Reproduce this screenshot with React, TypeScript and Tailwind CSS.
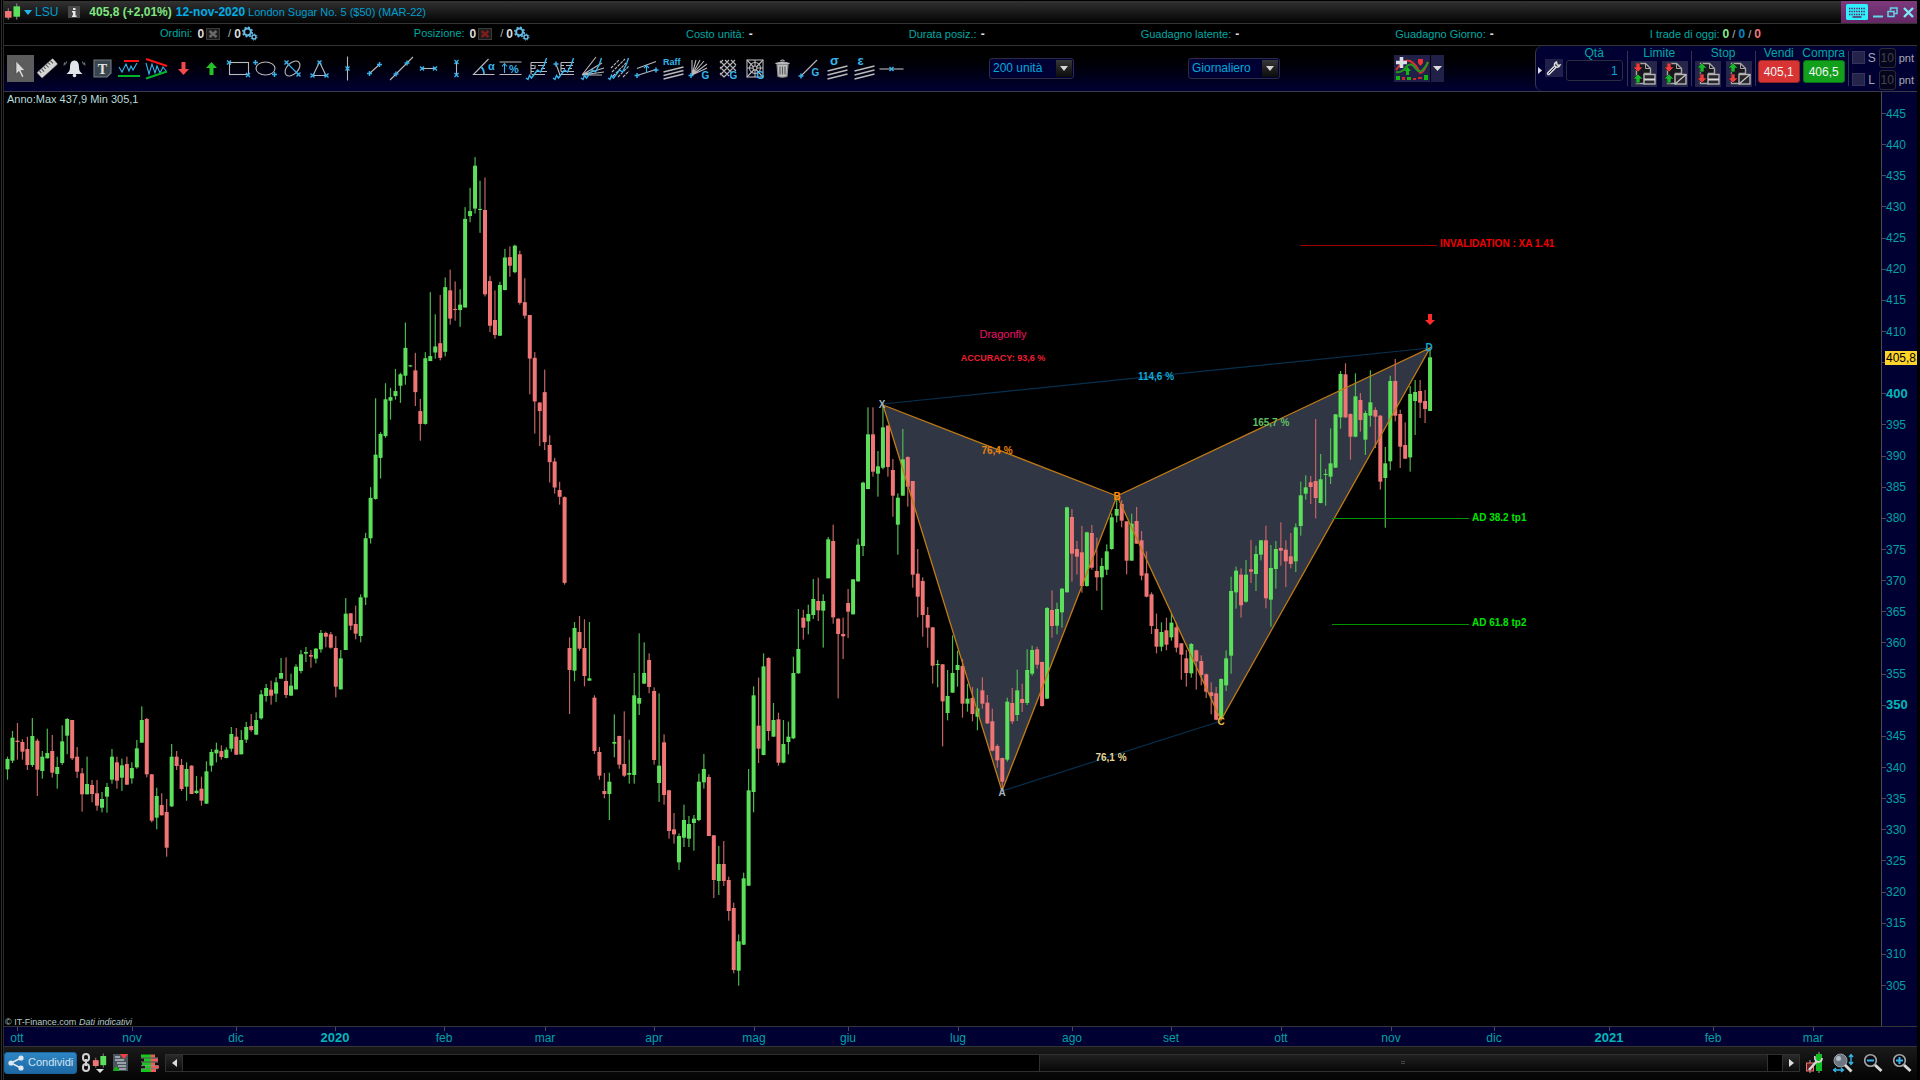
import React from "react";

const BLUE = "#35b5ea";
const GREY = "#b9b9b9";

/* ---------- price series ---------- */

// Each row: direction (u/d), high, body top, body bottom, low. Values are
// local to the block, converted with the block's offset and scale.
type Block = { top: number; scale: number; rows: string };

const BLOCKS: Block[] = [
  {
    top: 540,
    scale: 3,
    rows: `u650 657 688 719|u573 593 662 669|d549 602 606 659|d598 606 635 659|d590 627 675 690|u534 588 675 681|d596 602 689 768|u633 650 693 716|u566 639 655 655|d585 633 698 713|u650 681 702 746|u556 604 669 675|u534 537 587 643|d540 540 655 660|d621 650 695 714|d684 700 763 815|u650 732 763 763|d720 735 762 787|d720 760 797 812|u756 777 803 817|u729 741 770 818|u627 650 719 731|d650 667 722 746|u656 676 713 753|d650 672 734 734|u667 684 715 731|u600 625 682 686|u499 540 608 608|d534 537 703 712|d702 703 842 847|u743 768 833 868|d760 795 826 826|d777 816 923 950|u612 650 799 801|d633 650 678 690|d657 675 747 753|u667 687 740 782|d676 677 762 762|u708 752 759 762|d710 746 782 797|u664 694 791 791|u627 636 677 695|u608 629 640 667|d616 633 651 659|u622 629 654 655|u561 582 626 635|d564 590 644 645|u570 600 643 643|u546 561 599 609|d522 558 570 575|u517 540 584 584|u450 463 535 539|u432 444 468 485|d422 449 467 494|u412 427 461 486|u354 399 416 416|d352 423 465 474|u401 437 467 467|u373 380 448 449|u330 343 393 400|u321 336 341 366|d330 345 350 383|u324 326 356 370|u270 279 328 338|d275 279 290 322|d276 283 323 326|d288 324 440 472|u330 355 448 449|u174 221 330 330|d219 220 257 270|d197 252 281 298|u163 172 288 307`,
  },
  {
    top: 140,
    scale: 2.8,
    rows: `u1100 1115 1281 1302|u972 1002 1115 1130|u723 881 1005 1007|u818 823 890 948|u681 726 829 834|u694 720 730 783|u641 703 717 727|u652 656 688 736|u511 582 660 685|u630 631 634 635|d596 645 706 745|d725 759 795 842|u594 611 795 797|u426 605 619 619|u488 578 595 612|d434 569 610 617|u385 412 593 606|d363 421 500 517|d396 473 476 506|u418 461 476 523|u188 221 469 469|u134 199 213 230|u48 72 192 206|u114 193 195 260|d105 196 432 438|d381 395 520 538|d421 504 546 556|u397 406 548 549|u305 329 420 421|d298 328 352 383|u293 296 370 373|d310 320 456 461|d387 454 492 500|d490 490 612 712|d594 610 732 822|d735 735 759 857|d643 706 846 868|d827 854 902 959|d890 900 973 990|d957 980 999 1021|d998 1000 1240 1245`,
  },
  {
    top: 600,
    scale: 3,
    rows: `d112 144 210 342|u66 84 212 244|d48 96 146 152|d58 144 228 259|u66 235 242 242|d286 293 453 462|d441 456 527 539|d519 573 582 595|u518 545 582 660|u343 426 431 472|d407 408 494 506|d334 492 527 531|u419 519 524 551|u219 286 525 551|u100 294 311 345|u127 219 251 251|d160 180 261 280|d262 273 480 494|u280 497 549 606|d403 427 585 614|d569 571 693 716|d639 688 703 731|u700 708 787 810|u614 660 713 741|u648 672 716 741|u645 656 669 752|u521 545 660 664|u462 507 547 566|d523 531 708 708|d705 706 840 894|u738 792 843 885|d723 792 843 858|d830 840 933 962|d908 924 1110 1120|u1003 1024 1112 1157|u818 835 1034 1035|u507 571 857 858|u259 286 576 637|d233 377 446 489|u160 199 465 466|d172 174 393 422`,
  },
  {
    top: 380,
    scale: 3,
    rows: `u969 1020 1070 1070|d998 1018 1148 1157|u1020 1092 1148 1150|u1025 1070 1086 1123|u830 879 1075 1077|u687 807 880 881|d689 713 743 779|u674 702 724 763|u597 657 705 717|d593 663 691 723|u643 663 692 803|u471 478 595 595|d434 483 712 731|d715 716 762 955|d713 762 769 837|d627 669 695 774|u597 598 703 703|u476 494 604 605|u305 308 498 528|u82 163 327 328|d82 163 275 290|u213 259 281 350|u76 142 263 268|d136 137 261 290|d237 270 347 410|u340 353 434 524|u147 238 347 347|d229 231 320 380|d303 303 584 623|d507 581 650 712|d592 603 705 770|d681 705 743 803|d742 742 857 911|u840 852 854 922|d852 853 964 1099|u870 948 999 1021|u766 879 938 938|u812 855 870 920|d837 858 971 1013|u911 956 971 995|d921 954 1002 1024|u925 985 1010 1051|d892 931 971 986|d945 968 1030 1032|d986 1024 1112 1114|d1093 1098 1141 1163|d1133 1134 1205 1233|u953 965 1139 1145|d924 969 1024 1032|u869 931 1005 1023|d911 957 969 996|u808 870 969 975|u797 810 881 887|d800 808 854 866|d845 846 978 980|u681 684 956 957|d631 690 738 773|u668 687 737 763|u624 626 697 743|u380 382 637 637|d387 411 521 605|d483 507 530 584|d438 517 618 638|u455 457 618 620|d435 459 563 569|d473 573 592 632|u534 558 592 690|u493 514 569 585|u400 412 507 509|u360 387 407 427|d360 372 422 442|d424 424 542 583|u401 431 542 542|d381 423 491 491`,
  },
  {
    top: 460,
    scale: 3,
    rows: `d213 241 347 361|d274 340 410 412|d397 403 498 522|d461 507 560 580|u487 516 560 574|d473 511 554 571|u459 488 532 542|d487 502 563 577|d549 550 584 659|d570 595 639 680|u549 552 640 653|d569 571 604 689|d586 603 645 676|d640 643 695 714|d667 697 708 763|d681 700 779 781|u655 657 775 780|u571 595 676 693|u350 393 587 641|u320 332 397 446|d325 344 436 473|u300 344 425 428|d240 328 335 369|u257 282 342 393|u240 241 284 301|d197 241 415 445|u255 324 419 500|u243 267 327 386|d187 264 272 317|d241 269 304 381|d219 289 312 325|u190 202 304 336`,
  },
  {
    top: 220,
    scale: 3,
    rows: `u785 826 918 947|u766 802 821 839|d768 787 801 852|d597 783 834 895|u702 778 849 850|u747 762 764 857|u625 730 770 792|u582 583 743 744|u453 462 592 626|d430 463 592 594|d580 582 650 719|u460 529 650 652|d519 540 600 635|u572 579 659 705|u451 547 587 620|d562 570 590 684|d585 587 785 809|u681 730 774 923|u467 483 724 751|d417 483 587 604|d569 582 680 744|d607 675 716 717|u498 522 712 755|u480 516 543 645|d480 513 548 594|d510 543 567 609|u390 412 573 573`,
  },
];

const CANDLES = BLOCKS.flatMap(({ top, scale, rows }) =>
  rows.split("|").map((row) => {
    const [high, open, close, low] = row
      .slice(1)
      .split(" ")
      .map((v) => top + Number(v) / scale);
    return { up: row[0] === "u", high, open, close, low };
  })
);

const PRICES = Array.from({ length: 29 }, (_, i) => 445 - i * 5);
const CURRENT = 405;

const MONTHS: [number, string][] = [
  [17, "ott"], [132, "nov"], [236, "dic"], [335, "2020"], [444, "feb"], [545, "mar"],
  [654, "apr"], [754, "mag"], [848, "giu"], [958, "lug"], [1072, "ago"], [1171, "set"],
  [1281, "ott"], [1391, "nov"], [1494, "dic"], [1609, "2021"], [1713, "feb"], [1813, "mar"],
];

function PriceChart() {
  return (
    <svg viewBox="4 92 1877 934" preserveAspectRatio="xMinYMin meet" className="block h-full w-full" fontFamily='"Liberation Sans", Arial, sans-serif'>
      <polygon points="883,405 1002,791 1117,496" fill="#313645" />
      <polygon points="1117,496 1221,720 1430,348" fill="#313645" />
      {CANDLES.map((c, i) => {
        const x = 7.5 + i * 4.974;
        return (
          <g key={i}>
            <rect x={x - 0.6} y={c.high} width={1.2} height={c.low - c.high} fill={c.up ? "#4db84f" : "#c06464"} />
            <rect x={x - 2} y={c.open} width={4} height={Math.max(1, c.close - c.open)} fill={c.up ? "#5ce05c" : "#f07676"} />
          </g>
        );
      })}
      <g stroke="#07304f" strokeWidth={1.2}>
        <line x1={883} y1={404} x2={1430} y2={348} />
        <line x1={1002} y1={791} x2={1221} y2={721} />
      </g>
      <path d="M883 405L1002 791L1117 496ZM1117 496L1221 720L1430 348Z" fill="none" stroke="#c07c14" strokeWidth={1.3} />
      <g strokeWidth={1}>
        <line x1={1300} y1={245.5} x2={1437} y2={245.5} stroke="#a00000" />
        <line x1={1332} y1={518.5} x2={1469} y2={518.5} stroke="#009600" />
        <line x1={1332} y1={624.5} x2={1469} y2={624.5} stroke="#009600" />
      </g>
      <path d="M1428 314h4v6h3l-5 5l-5-5h3z" fill="#ff2b2b" />
      <g fontSize={10} fontWeight={700}>
        <text x={1440} y={247} fill="#f00000">INVALIDATION : XA 1.41</text>
        <text x={1472} y={521} fill="#00e400">AD 38.2 tp1</text>
        <text x={1472} y={626} fill="#00e400">AD 61.8 tp2</text>
      </g>
      <g fontSize={10} fontWeight={700} textAnchor="middle">
        <text x={1003} y={338} fill="#f01068" fontSize={11} fontWeight={400}>Dragonfly</text>
        <text x={1003} y={361} fill="#f01e32" fontSize={9}>ACCURACY: 93,6 %</text>
        <text x={1156} y={380} fill="#12a8d8">114,6 %</text>
        <text x={997} y={454} fill="#e8820c">76,4 %</text>
        <text x={1271} y={426} fill="#5fbf63">165,7 %</text>
        <text x={1111} y={761} fill="#e6d694">76,1 %</text>
        <text x={882} y={408} fill="#9fb0bf">X</text>
        <text x={1002} y={796} fill="#9fb0bf">A</text>
        <text x={1117} y={500} fill="#ff8c0a">B</text>
        <text x={1221} y={725} fill="#e8b84a">C</text>
        <text x={1429} y={351} fill="#12a8d8">D</text>
      </g>
      <text x={7} y={103} fontSize={11} fill="#b5dcdc">Anno:Max 437,9 Min 305,1</text>
      <text x={5} y={1025} fontSize={9} fill="#b5cccc">© IT-Finance.com</text>
      <text x={79} y={1025} fontSize={9} fontStyle="italic" fill="#b5cccc">Dati indicativi</text>
    </svg>
  );
}

function PriceAxis() {
  return (
    <aside className="relative flex w-[36px] flex-none flex-col border-l border-[#4a4a58] bg-[#000033] pt-[6px] pb-[25px]">
      {PRICES.map((p) => (
        <div key={p} className="flex flex-1 items-center">
          <span className="h-px w-[4px] bg-[#4a4a58]" />
          {p !== CURRENT && (
            <span className={p % 50 === 0 ? "text-[13px] font-bold text-[#00b8b8]" : "text-[12px] text-[#00a2a4]"}>{p}</span>
          )}
        </div>
      ))}
      <span className="absolute top-[259px] right-0 left-[3px] h-[14px] bg-[#ffd42a] text-center text-[12px] leading-[14px] text-black">405,8</span>
    </aside>
  );
}

function TimeAxis() {
  return (
    <div className="h-[20px] flex-none border-t border-[#333338] bg-[#000033]">
      <svg viewBox="4 1027 1913 19" preserveAspectRatio="xMinYMin meet" className="block h-full w-full" fontFamily='"Liberation Sans", Arial, sans-serif' textAnchor="middle">
        {MONTHS.map(([x, m]) => {
          const year = m.startsWith("20");
          return (
            <g key={x}>
              <line x1={x + 0.5} x2={x + 0.5} y1={1027} y2={1031} stroke="#4a4a58" />
              <text x={x} y={1042} fontSize={year ? 13 : 12} fontWeight={year ? 700 : 400} fill={year ? "#00b8b8" : "#00a2a4"}>{m}</text>
            </g>
          );
        })}
      </svg>
    </div>
  );
}

/* ---------- toolbar icons (27 x 27) ---------- */

function Cross({ x, y, r = 2 }: { x: number; y: number; r?: number }) {
  return <path d={`M${x - r} ${y - r}L${x + r} ${y + r}M${x + r} ${y - r}L${x - r} ${y + r}`} stroke={BLUE} strokeWidth={1.4} />;
}
function Plus({ x, y, r = 2.5 }: { x: number; y: number; r?: number }) {
  return <path d={`M${x - r} ${y}h${2 * r}M${x} ${y - r}v${2 * r}`} stroke={BLUE} strokeWidth={1.5} />;
}
function Glyph({ x, y, children, size = 10 }: { x: number; y: number; children: string; size?: number }) {
  return <text x={x} y={y} fontSize={size} fontWeight={700} fill={BLUE} stroke="none" fontFamily='"Liberation Sans", sans-serif'>{children}</text>;
}
const WAVE = "M2 23l2 1.5l1.5 -4l2 2.5l6 -8l3 2l4 -8l2 -6";

const TOOLS: [string, React.ReactNode][] = [
  ["Puntatore", <path d="M9 6v13l3-2.5l3 6l2-1l-3-6h4z" fill="#d8d8d8" stroke="#444" strokeWidth={0.6} />],
  ["Righello", (
    <g transform="rotate(-42 13.5 13.5)">
      <rect x={3} y={9.5} width={21} height={7.5} rx={0.8} fill="#d6d6d6" stroke="#888" strokeWidth={0.5} />
      <path d="M6 9.5v3M9 9.5v4M12 9.5v3M15 9.5v4M18 9.5v3M21 9.5v4" stroke="#555" />
    </g>
  )],
  ["Allarme", (
    <g>
      <path d="M13.5 5.5c-4 0-4.500 4-4.500 7c0 3-1 4.500-3.500 6.500h16c-2.500-2-3.500-3.500-3.500-6.500c0-3-.500-7-4.500-7z" fill="#e2e6ea" stroke="none" />
      <circle cx={13.500} cy={20.500} r={1.800} fill="#e2e6ea" stroke="none" />
      <path d="M5.500 6.500l-1 3M3.500 7.500l-.500 3M21.500 6.500l1 3M23.500 7.500l.500 3" stroke="#7c8a98" strokeWidth={1} />
    </g>
  )],
  ["Testo", (
    <g>
      <path d="M5 5h17v13l-4 4h-13z" fill="#3a444d" stroke="#737d85" />
      <text x={13.500} y={19} fontSize={14} fontWeight={700} textAnchor="middle" fill="#e4e4e4" stroke="none" fontFamily='"Liberation Serif", serif'>T</text>
    </g>
  )],
  ["Supporti e resistenze", (
    <g>
      <path d="M3 12l3 5l4-8l3 7l2-5l2 4l4-7" stroke={BLUE} />
      <path d="M8 6h15" stroke="#ff1515" strokeWidth={2} />
      <path d="M2 21h22" stroke="#00b428" strokeWidth={2} />
    </g>
  )],
  ["Trend", (
    <g>
      <path d="M3 8l3 11l3-10l3 9l2-7l3 7l3-6l3 4" stroke={BLUE} />
      <path d="M3 4l21 7" stroke="#ff1515" strokeWidth={2} />
      <path d="M3 23.500l21-7" stroke="#00b428" strokeWidth={2} />
    </g>
  )],
  ["Freccia giù", <path d="M11.500 7h4v7h3.500l-5.500 6l-5.500-6h3.500z" fill="#f24a4a" stroke="none" />],
  ["Freccia su", <path d="M11.500 20h4v-7h3.500l-5.500-6l-5.500 6h3.500z" fill="#25c225" stroke="none" />],
  ["Rettangolo", <g><rect x={4.500} y={7.500} width={19} height={12} /><Cross x={4} y={7.500} /><Cross x={23} y={20} /></g>],
  ["Ellisse", <g><ellipse cx={13.500} cy={13.500} rx={9.500} ry={6.500} /><Plus x={3.500} y={7.500} /><Plus x={22.500} y={19.500} /></g>],
  ["Ellisse inclinata", <g><ellipse cx={13.500} cy={13.500} rx={9} ry={5.500} transform="rotate(-45 13.500 13.500)" /><path d="M7.500 7.500l12 12" stroke={BLUE} /><Cross x={7.500} y={7.500} /><Cross x={19.500} y={19.500} /></g>],
  ["Triangolo", <g><path d="M13.500 7l6.500 13.500h-13z" /><Cross x={13.500} y={7.500} /><Cross x={6.500} y={20.500} /><Cross x={20.500} y={20.500} /></g>],
  ["Linea verticale", <g><path d="M13.500 1.500v24" /><Cross x={13.500} y={13.500} /></g>],
  ["Segmento", <g><path d="M8.500 18.500l10-9" /><Plus x={8.500} y={18.500} /><Plus x={18.500} y={9.500} /></g>],
  ["Linea", <g><path d="M2 25l23-23" /><Plus x={8} y={19} /><Plus x={19} y={8} /></g>],
  ["Misura orizzontale", <g><path d="M6 13.500h15" /><Cross x={7} y={13.500} /><Cross x={20} y={13.500} /></g>],
  ["Misura verticale", <g><path d="M13.500 7v13" /><Cross x={13.500} y={7} /><Cross x={13.500} y={20} /></g>],
  ["Angolo", <g><path d="M18.500 4l-15 15.500h21" /><path d="M14 19q0-5-3-7" stroke={BLUE} strokeWidth={1.800} /><Glyph x={18} y={15} size={11}>α</Glyph></g>],
  ["Percentuale", <g><path d="M2.500 7h22M2.500 19.500h22" /><path d="M7.500 18v-9M5 11.500l2.500-3l2.500 3" stroke={BLUE} /><Glyph x={12} y={18} size={11}>%</Glyph></g>],
  ["Ritracciamenti", <g><path d="M7 7.500h16M7 10.500h3M14 10.500h7M7 13.500h4M17 13.500h4M7 16.500h3M13 16.500h10M8 19.500h13M7 7.500v12M11 10v4" /><path d={WAVE} stroke={BLUE} strokeWidth={1.400} /></g>],
  ["Estensioni", <g><path d="M10 7.500h13M10 10.500h3M15 10.500h7M10 13.500h4M17 13.500h4M10 16.500h13M8 19.500h15M5 9l4 11M10 7.500v9" /><path d={WAVE} stroke={BLUE} strokeWidth={1.400} /><Plus x={5} y={9} /></g>],
  ["Ventaglio", <g><path d="M3 20l14-18M3 20l20-12M3 20l22-7M3 20l22-3M3 20h20" /><path d={WAVE} stroke={BLUE} strokeWidth={1.400} /></g>],
  ["Linee parallele", <g strokeDasharray="3 1"><path d="M5 13l8-8M6 17l13-13M7 21l13-13M12 22l11-11M17 22l6-6" /><path d={WAVE} stroke={BLUE} strokeWidth={1.400} strokeDasharray="none" /></g>],
  ["Canale", <g><path d="M4 13.500l19-7M4 20.500l19-6" /><path d="M13.500 18v-7M11 13l2.500-2.500l2.500 2.500" stroke={BLUE} /><Plus x={4} y={20.500} /><Plus x={23} y={15} /></g>],
  ["Canale Raff", <g><Glyph x={3} y={10} size={9}>Raff</Glyph><path d="M3.500 17l20-5M3.500 20.500l20-5M3.500 24l20-5" strokeWidth={1.300} /></g>],
  ["Ventaglio di Gann", <g><path d="M5 20l0-15M5 20l4-15M5 20l8-15M5 20l12-14M5 20l15-11M5 20l15-7" /><Plus x={4} y={20.500} /><Glyph x={14.500} y={24}>G</Glyph></g>],
  ["Griglia di Gann", <g><path d="M5 8l3-3M5 14l9-9M5 20l15-15M9 22l12-12M5 18l4 4M5 12l9 9M5 6l12 12M10 5l11 11M16 5l5 5" /><Glyph x={14.500} y={24}>G</Glyph></g>],
  ["Quadrato di Gann", <g><rect x={5} y={5} width={16} height={17} /><circle cx={13} cy={13} r={5.500} /><path d="M5 5l16 17M21 5l-16 17M13 5v17M5 13h16" /><circle cx={13} cy={13} r={2} fill="#000" /><Glyph x={14.500} y={24}>G</Glyph></g>],
  ["Elimina", (
    <g>
      <path d="M8 9.500h11l-1 12q-4.500 1.500-9 0z" fill="#bdbdbd" stroke="#8a8a8a" />
      <path d="M11 11.500v8M13.500 11.500v8M16 11.500v8" stroke="#555" />
      <path d="M6.500 8.500q7-3 14 0z" fill="#d8d8d8" /><path d="M11.500 6q2-2 4 0" />
    </g>
  )],
  ["Linea di Gann", <g><path d="M5 21l16-16" /><Plus x={5} y={21} /><Glyph x={15.500} y={21}>G</Glyph></g>],
  ["Deviazione standard", <g><Glyph x={6} y={9.500} size={13}>σ</Glyph><path d="M3.500 16l20-5M3.500 20l20-5M3.500 24l20-5" strokeWidth={1.300} /></g>],
  ["Errore standard", <g><Glyph x={6.500} y={9.500} size={13}>ε</Glyph><path d="M3.500 16l20-5M3.500 20l20-5M3.500 24l20-5" strokeWidth={1.300} /></g>],
  ["Linea orizzontale", <g><path d="M1.500 14h24" /><Cross x={13.500} y={14} /></g>],
];

function DrawingTools() {
  return (
    <div role="toolbar" aria-label="Strumenti" className="flex w-[898px] flex-none items-center justify-between">
      {TOOLS.map(([name, art], i) => (
        <button key={name} aria-label={name} className={i === 0 ? "size-[27px] bg-[#5c5c5c]" : "size-[27px]"}>
          <svg viewBox="0 0 27 27" width={27} height={27} fill="none" stroke={GREY} strokeWidth={1.1} className="block">{art}</svg>
        </button>
      ))}
    </div>
  );
}

function Dropdown({ label, value, box }: { label: string; value: string; box: string }) {
  return (
    <div className={`relative h-[21px] flex-none ${box}`}>
      <select aria-label={label} defaultValue={value} className="block h-full w-full appearance-none rounded-[3px] border border-[#2c2c48] bg-[#000033] pl-[3px] text-[12px] text-[#00a8dc]">
        <option>{value}</option>
      </select>
      <span className="pointer-events-none absolute top-[2px] right-[2px] flex h-[17px] w-[16px] items-center justify-center bg-gradient-to-b from-[#383838] to-[#0c0c0c]">
        <svg width={8} height={5} viewBox="0 0 8 5"><path d="M0 0h8l-4 5z" fill="#d4d4d4" /></svg>
      </span>
    </div>
  );
}

/* ---------- small shared drawings ---------- */

function CandlePair({ width, height }: { width: number; height: number }) {
  return (
    <svg width={width} height={height} viewBox="0 0 18 18">
      <path d="M4.500 5v12M13.500 0v17" stroke="#9a9a9a" />
      <rect x={1} y={8} width={7} height={7} fill="#f07676" />
      <rect x={10} y={3} width={7} height={11} fill="#5ce05c" />
    </svg>
  );
}

function Gears() {
  return (
    <svg width={17} height={15} viewBox="0 0 17 15" fill="none" stroke="#62bfe8">
      <circle cx={6.500} cy={6} r={3.400} strokeWidth={2} />
      <circle cx={6.500} cy={6} r={4.800} strokeWidth={1.500} strokeDasharray="1.900 1.870" />
      <circle cx={13} cy={11} r={2} strokeWidth={1.400} />
      <circle cx={13} cy={11} r={3.100} strokeWidth={1} strokeDasharray="1.200 1.200" />
    </svg>
  );
}

function CancelButton({ color, label }: { color: string; label: string }) {
  return (
    <button aria-label={label} className="ml-[2px] flex h-[12px] w-[14px] items-center justify-center border border-[#3a3a3a] bg-[#1c1c1c]">
      <svg width={10} height={8} viewBox="0 0 10 8"><path d="M1.500 1l7 6M8.500 1l-7 6" stroke={color} strokeWidth={2.600} /></svg>
    </button>
  );
}

/* ---------- header rows ---------- */

function TitleBar() {
  return (
    <header className="mt-px flex h-[23px] flex-none items-center border-b border-[#333] bg-gradient-to-b from-[#333] to-[#050505] text-[12px] whitespace-nowrap text-[#009fd0]">
      <CandlePair width={17} height={18} />
      <button className="ml-[3px] flex items-center gap-[3px]">
        <svg width={8} height={5} viewBox="0 0 8 5"><path d="M0 0h8l-4 5z" fill="#20b8e8" /></svg>
        LSU
      </button>
      <button aria-label="Informazioni" className="ml-[10px] flex size-[12px] items-center justify-center bg-[#484848]">
        <svg width={6} height={9} viewBox="0 0 6 9"><path d="M2 0h2.500v2h-2.500zM1 3h3.500v4.500h1v1.500h-4.500v-1.500h1v-3h-1z" fill="#e8e8e8" /></svg>
      </button>
      <strong className="ml-[9px] text-[#80e880]">405,8 (+2,01%)</strong>
      <strong className="ml-[4px] text-[#00aee6]">12-nov-2020</strong>
      <span className="ml-[3px] text-[11px]">London Sugar No. 5 ($50) (MAR-22)</span>
      <div className="ml-auto flex h-full w-[76px] items-center justify-between bg-gradient-to-b from-[#7c3a7c] to-[#642664] pr-[3px] pl-[5px]">
        <button aria-label="Tastiera">
          <svg width={22} height={16} viewBox="0 0 22 16" className="block">
            <rect width={22} height={16} rx={1.500} fill="#2ff0ff" />
            <path d="M3 4.500h16M3 7.500h16M3 10.500h16" stroke="#5b255b" strokeWidth={1.400} strokeDasharray="1.400 1" />
            <path d="M6.500 13h9" stroke="#5b255b" strokeWidth={1.500} />
          </svg>
        </button>
        <button aria-label="Riduci"><svg width={10} height={12} viewBox="0 0 10 12" className="block"><path d="M0 10.500h10" stroke="#5fd8e8" strokeWidth={2} /></svg></button>
        <button aria-label="Ripristina"><svg width={11} height={11} viewBox="0 0 11 11" className="block" fill="none" stroke="#5fd8e8" strokeWidth={1.500}><path d="M3.500 3.500v-2.500h6.500v5.500h-2.500" /><rect x={1} y={4.500} width={6} height={5} /></svg></button>
        <button aria-label="Chiudi"><svg width={11} height={11} viewBox="0 0 11 11" className="block"><path d="M1 1l9 9M10 1l-9 9" stroke="#7fe8f4" strokeWidth={2.400} /></svg></button>
      </div>
    </header>
  );
}

function Counter({ label, color }: { label: string; color: string }) {
  return (
    <div className="flex items-center">
      {label} <b className="ml-[5px] text-[12px] text-[#ddd]">0</b>
      <CancelButton color={color} label={`Cancella ${label}`} />
      <span className="ml-[8px] text-[#bbb]">/</span>
      <b className="ml-[3px] text-[12px] text-[#ddd]">0</b>
      <Gears />
    </div>
  );
}

function StatsRow() {
  return (
    <div className="flex h-[22px] flex-none items-center justify-evenly border-b border-[#333] pb-[2px] text-[11px] whitespace-nowrap text-[#00a8a4]">
      <Counter label="Ordini:" color="#686868" />
      <Counter label="Posizione:" color="#7c1c1c" />
      {["Costo unità:", "Durata posiz.:", "Guadagno latente:", "Guadagno Giorno:"].map((l) => (
        <div key={l}>{l} <b className="ml-[1px] text-[12px] text-[#ddd]">-</b></div>
      ))}
      <div className="text-[#bbb]">
        <span className="text-[#00a8a4]">I trade di oggi: </span>
        <b className="text-[12px] text-[#8ce88c]">0</b> / <b className="text-[12px] text-[#0088c0]">0</b> / <b className="text-[12px] text-[#f07878]">0</b>
      </div>
    </div>
  );
}

/* ---------- order panel ---------- */

function OrderIcon({ first, second, mark, label }: { first: string; second: string; mark: "bars" | "slash"; label: string }) {
  const up = "l-5 5h3v4h4v-4h3z";
  const down = "l-5-5h3v-4h4v4h3z";
  const firstUp = first === "up";
  return (
    <button aria-label={label} className="size-[26px] bg-[#26264a]">
      <svg viewBox="0 0 26 26" width={26} height={26} className="block">
        <path d="M5.500 2.500h9l5 5v5h-6v10h-8z" fill="#16161c" stroke="#a8a8a8" strokeWidth={1.400} />
        <path d="M14.500 2.500v5h5" fill="none" stroke="#a8a8a8" />
        <path d={firstUp ? `M7 2${up}` : `M7 11${down}`} fill={firstUp ? "#18b82c" : "#ee3b3b"} stroke="#16161c" strokeWidth={0.600} />
        <path d={second === "up" ? `M7 13${up}` : `M7 22${down}`} fill={second === "up" ? "#18b82c" : "#ee3b3b"} stroke="#16161c" strokeWidth={0.600} />
        <rect x={13} y={13.500} width={11} height={9.500} fill="#26262c" stroke="#b4b4b4" strokeWidth={1.400} />
        {mark === "bars" ? <path d="M13 18.500h11" stroke="#d8d8d8" strokeWidth={2} /> : <path d="M13 23l11-9.500" stroke="#c4c4c4" strokeWidth={1.300} />}
      </svg>
    </button>
  );
}

function StopRow({ name }: { name: string }) {
  return (
    <label className="flex h-[21px] items-center text-[11px] text-[#a8a8b0]">
      <input type="checkbox" aria-label={name} className="size-[13px] appearance-none border border-[#34345c] bg-[#24244a]" />
      <span className="w-[14px] text-center text-[12px]">{name}</span>
      <input aria-label={`${name} pnt`} defaultValue="10" className="h-[20px] w-[17px] rounded-[3px] border border-[#2c2c38] bg-[#04041c] text-center text-[12px] text-[#44444c]" />
      <span className="ml-[3px]">pnt</span>
    </label>
  );
}

function OrderGroup({ title, children }: { title: string; children: React.ReactNode }) {
  return (
    <div className="mx-[3px] flex w-[57px] flex-col items-center">
      {title}
      <div className="flex w-full justify-between pt-px">{children}</div>
    </div>
  );
}

function OrderPanel() {
  const divider = <span className="mt-[5px] h-[35px] w-px bg-[#34344a]" />;
  return (
    <section aria-label="Ordine" className="ml-auto flex h-[45px] flex-none self-start rounded-l-[7px] border-l border-[#3a3a4c] bg-[#000033] pl-[2px] text-[12px] leading-[14px] text-[#00a8a4]">
      <button aria-label="Comprimi" className="flex w-[7px] items-center pt-[3px]">
        <svg width={4} height={7} viewBox="0 0 4 7"><path d="M0 0l4 3.500l-4 3.500z" fill="#ddd" /></svg>
      </button>
      <button aria-label="Impostazioni" className="mt-[13px] flex size-[18px] items-center justify-center bg-[#20204a]">
        <svg width={16} height={16} viewBox="0 0 16 16" fill="none" stroke="#dcdcdc" strokeLinecap="round">
          <path d="M2.500 13.500l6.500-6.500" stroke="#dcdcdc" strokeWidth={3.400} /><path d="M2.700 13.300l6-6" stroke="#20204a" strokeWidth={1} />
          <path d="M10.500 2q-3 1.500-1.500 4.500q3.500 2 5-1.500l-2 .500l-1-1.200z" fill="#20204a" strokeWidth={1.500} />
        </svg>
      </button>
      <label className="ml-[3px] flex w-[57px] flex-col items-center">
        Qtà
        <input defaultValue="1" className="h-[21px] w-full rounded-[3px] border border-[#2c2c40] bg-[#000028] pr-[4px] text-right text-[12px] text-[#00a8dc]" />
      </label>
      <span className="w-[4px]" />
      {divider}
      <OrderGroup title="Limite">
        <OrderIcon first="down" second="up" mark="bars" label="Ordine limite" />
        <OrderIcon first="down" second="up" mark="slash" label="Limite su linea" />
      </OrderGroup>
      {divider}
      <OrderGroup title="Stop">
        <OrderIcon first="up" second="down" mark="bars" label="Ordine stop" />
        <OrderIcon first="up" second="down" mark="slash" label="Stop su linea" />
      </OrderGroup>
      {divider}
      <div className="ml-[2px] flex w-[42px] flex-col items-center">
        Vendi
        <button className="h-[23px] w-full rounded-[3px] border border-[#8c2424] bg-[#d83434] text-[#f4f4f4]">405,1</button>
      </div>
      <div className="mr-[3px] ml-[3px] flex w-[42px] flex-col items-center">
        Compra
        <button className="h-[23px] w-full rounded-[3px] border border-[#0c6c14] bg-[#12a01c] text-[#f4f4f4]">406,5</button>
      </div>
      {divider}
      <div className="mr-[3px] ml-[3px] flex flex-col gap-[1px] pt-[1px]">
        <StopRow name="S" />
        <StopRow name="L" />
      </div>
    </section>
  );
}

function Toolbar() {
  return (
    <div className="flex h-[46px] flex-none items-center border-b border-[#3a3a48] bg-gradient-to-b from-black to-[#000033] pb-px pl-[3px]">
      <DrawingTools />
      <Dropdown label="Numero di unità" value="200 unità" box="ml-[84px] w-[85px]" />
      <Dropdown label="Intervallo" value="Giornaliero" box="ml-[114px] w-[92px]" />
      <div className="ml-[114px] flex h-[27px]">
        <button aria-label="Aggiungi indicatore" className="w-[36px] bg-[#202048]">
          <svg width={36} height={27} viewBox="0 0 36 27" className="block" fill="none">
            <path d="M2 15q8-12 14-9t10 12q4 0 8-11" stroke="#d83030" strokeWidth={2} />
            <path d="M2 17q6 1 10-5q5-6 10 2q5 7 12-7" stroke="#209820" strokeWidth={2} />
            <path d="M13.500 12l-3.500 4h2v4h3v-4h2zM2 21h4v4h-4zM13 22h4v3h-4zM30 20h4v5h-4z" fill="#14b414" />
            <path d="M8 22h3v3h-3zM19 23h3v2h-3zM24 22h4v2h-4z" fill="#d02828" />
            <path d="M24 4h5v4l-2.500 3l-2.500-3z" fill="#f03434" />
            <path d="M7.500 2v11M2 7.500h11" stroke="#dcdce4" strokeWidth={3.600} />
          </svg>
        </button>
        <button aria-label="Altri indicatori" className="ml-px flex w-[13px] items-center justify-center bg-[#202048]">
          <svg width={9} height={5} viewBox="0 0 9 5"><path d="M0 0h9l-4.500 5z" fill="#dcdcdc" /></svg>
        </button>
      </div>
      <OrderPanel />
    </div>
  );
}

/* ---------- bottom bar ---------- */

function Lens({ sign }: { sign: "plus" | "minus" }) {
  return (
    <svg width={20} height={20} viewBox="0 0 20 20" fill="none" className="block">
      <circle cx={7.500} cy={7.500} r={5.800} fill="#0a0a14" stroke="#a8a8a8" strokeWidth={1.600} />
      <path d="M12 12l6.500 6" stroke="#d8d8d8" strokeWidth={3} />
      <path d={sign === "plus" ? "M4 7.500h7M7.500 4v7" : "M4 7.500h7"} stroke={BLUE} strokeWidth={2} />
    </svg>
  );
}

function BottomBar() {
  return (
    <footer className="flex h-[34px] flex-none items-center border-t border-[#333] bg-gradient-to-b from-[#1a1a1a] to-[#050505] pb-[2px]">
      <button className="flex h-[22px] w-[73px] items-center gap-[4px] rounded-[3px] border border-[#1c639c] bg-gradient-to-b from-[#2e86c4] to-[#1c68a4] pl-[3px] text-[11px] text-[#d4e4f0]">
        <svg width={16} height={16} viewBox="0 0 16 16" className="flex-none"><path d="M13 3l-10 5l10 5" fill="none" stroke="#dfe7ee" strokeWidth={1.600} /><circle cx={13} cy={3} r={2.600} fill="#dfe7ee" /><circle cx={3} cy={8} r={2.600} fill="#dfe7ee" /><circle cx={13} cy={13} r={2.600} fill="#dfe7ee" /></svg>
        Condividi
      </button>
      <button aria-label="Collega grafici" className="ml-[4px]">
        <svg width={10} height={19} viewBox="0 0 10 19" className="block" fill="none" stroke="#d0d0d0" strokeWidth={2}><rect x={2} y={1} width={6} height={7} rx={3} /><rect x={2} y={11} width={6} height={7} rx={3} /><path d="M5 6v7" /></svg>
      </button>
      <button aria-label="Tipo di grafico" className="ml-[1px] flex flex-col items-center">
        <CandlePair width={15} height={16} />
        <svg width={8} height={4} viewBox="0 0 8 4"><path d="M0 0h8l-4 4z" fill="#ddd" /></svg>
      </button>
      <button aria-label="Notizie" className="ml-[6px]">
        <svg width={15} height={17} viewBox="0 0 15 17" className="block"><rect width={15} height={17} fill="#4a545c" /><path d="M2 3h5M2 6h9M4 9h9M5 12h8M6 15h7" stroke="#b4bcc4" strokeWidth={1.300} /><path d="M7 0h8l-4 5z" fill="#f04040" /><path d="M0 17h7l-4-5z" fill="#14b414" /></svg>
      </button>
      <button aria-label="Profondità" className="ml-[13px]">
        <svg width={18} height={18} viewBox="0 0 18 18" className="block"><path d="M0 2h10M3 6h7M1 10h9M4 13h6M0 16.500h10" stroke="#14c81c" strokeWidth={3} /><path d="M10 2h4M10 6h7M10 10h4M10 13h8M10 16.500h5" stroke="#f05a5a" strokeWidth={3} /><path d="M0 4h17M0 8h17M0 11.700h17M0 14.700h17" stroke="#9a9a9a" strokeWidth={0.800} /></svg>
      </button>
      <div className="ml-[6px] flex h-[18px] flex-1 border border-[#303030] bg-black">
        <button aria-label="Scorri indietro" className="flex w-[17px] items-center justify-center border-r border-[#303030] bg-gradient-to-b from-[#2a2a2a] to-[#0c0c0c]"><svg width={5} height={8} viewBox="0 0 5 8"><path d="M5 0v8l-5-4z" fill="#ddd" /></svg></button>
        <div className="flex flex-1 justify-end pr-[14px]">
          <div role="presentation" className="flex w-[46%] items-center justify-center border-x border-[#303030] bg-gradient-to-b from-[#202020] to-[#080808]"><span className="h-[3px] w-[4px] border-y border-[#444]" /></div>
        </div>
        <button aria-label="Scorri avanti" className="flex w-[17px] items-center justify-center border-l border-[#303030] bg-gradient-to-b from-[#2a2a2a] to-[#0c0c0c]"><svg width={5} height={8} viewBox="0 0 5 8"><path d="M0 0v8l5-4z" fill="#ddd" /></svg></button>
      </div>
      <div className="mr-[5px] ml-[6px] flex w-[106px] flex-none items-center justify-between">
        <button aria-label="Configura grafico">
          <svg width={18} height={21} viewBox="0 0 18 21" className="block" fill="none"><path d="M4 8v13M13 0v21" stroke="#a4a4a4" /><rect x={0.500} y={11} width={7} height={8} stroke="#f07676" fill="#5c2020" /><rect x={10} y={2} width={6} height={17} fill="#10c020" /><path d="M3 18l8-9" stroke="#d4d4d4" strokeWidth={2.600} /><path d="M9 4q-1 5 3 6q4 0 4-4" stroke="#d4d4d4" strokeWidth={1.800} /></svg>
        </button>
        <button aria-label="Zoom automatico">
          <svg width={21} height={20} viewBox="0 0 21 20" className="block" fill="none"><circle cx={7.500} cy={7.500} r={6.500} fill="#6c7680" stroke="#98a0a8" /><circle cx={5.500} cy={5.500} r={2.500} fill="#b4bcc4" /><path d="M12 12l6.500 6.500" stroke="#d4d4d4" strokeWidth={3} /><path d="M18 2v9M16 4l2-2.500l2 2.500M16 9l2 2.500l2-2.500M1 17h9M3 15l-2.500 2l2.500 2M8 15l2.500 2l-2.500 2" stroke={BLUE} strokeWidth={1.400} /></svg>
        </button>
        <button aria-label="Riduci zoom"><Lens sign="minus" /></button>
        <button aria-label="Aumenta zoom"><Lens sign="plus" /></button>
      </div>
    </footer>
  );
}

export default function App() {
  return (
    <div className='flex h-screen bg-black pr-[3px] pl-px font-["Liberation_Sans",Arial,sans-serif]'>
      <div className="w-[3px] flex-none border-x border-[#2c2c2c]" />
      <main className="flex min-w-0 flex-1 flex-col">
        <TitleBar />
        <StatsRow />
        <Toolbar />
        <div className="flex min-h-0 flex-1">
          <div className="min-w-0 flex-1"><PriceChart /></div>
          <PriceAxis />
        </div>
        <TimeAxis />
        <BottomBar />
      </main>
    </div>
  );
}
